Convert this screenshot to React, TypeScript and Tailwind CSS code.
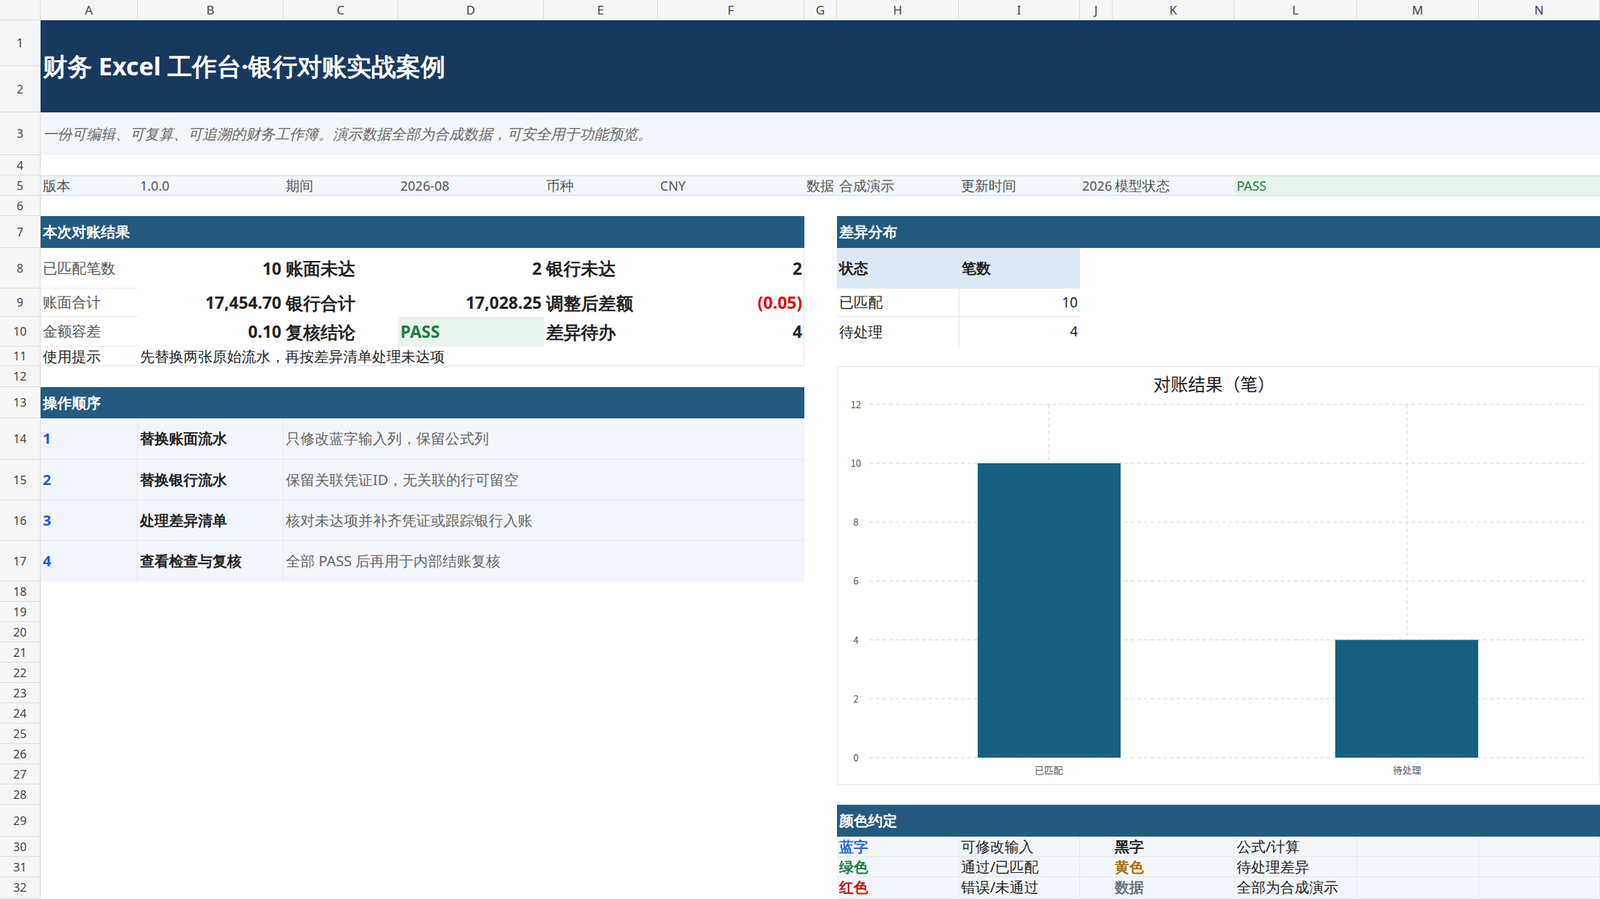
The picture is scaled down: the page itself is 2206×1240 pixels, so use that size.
import React from "react";

const colW = [134, 201, 158, 201, 157, 202, 45, 168, 167, 45, 168, 169, 168, 167];
const letters = ["A", "B", "C", "D", "E", "F", "G", "H", "I", "J", "K", "L", "M", "N"];
const rowH = [63, 64, 59, 28, 28, 28, 44, 56, 39, 41, 27, 29, 43, 57, 56, 56, 56, 28, 28, 28, 28, 28, 28, 28, 28, 28, 28, 28, 44, 28, 28, 29];

const cell = "flex items-center px-[3px] whitespace-nowrap overflow-visible";
const bd = "border-b border-r border-[#e3e8ef]";

function Chart() {
  const y0 = 539;
  const u = 40.6;
  const ticks = [0, 2, 4, 6, 8, 10, 12];
  return (
    <svg width="1052" height="576" className="block">
      <text x="519" y="33" textAnchor="middle" fontSize="24" fill="#222" fontFamily="Noto Sans CJK SC, sans-serif">对账结果（笔）</text>
      {ticks.map((t) => (
        <g key={t}>
          <line x1="44" x2="1030" y1={y0 - t * u} y2={y0 - t * u} stroke="#d4d4d4" strokeDasharray="5 4" />
          <text x="25" y={y0 - t * u + 5} textAnchor="middle" fontSize="13" fill="#555" fontFamily="Noto Sans CJK SC, sans-serif">{t}</text>
        </g>
      ))}
      <line x1="291" x2="291" y1={y0 - 12 * u} y2={y0} stroke="#d4d4d4" strokeDasharray="5 4" />
      <line x1="785" x2="785" y1={y0 - 12 * u} y2={y0} stroke="#d4d4d4" strokeDasharray="5 4" />
      <rect x="193" y={y0 - 10 * u} width="197" height={10 * u} fill="#156082" />
      <rect x="686" y={y0 - 4 * u} width="197" height={4 * u} fill="#156082" />
      <text x="291" y="561" textAnchor="middle" fontSize="13" fill="#555" fontFamily="Noto Sans CJK SC, sans-serif">已匹配</text>
      <text x="785" y="561" textAnchor="middle" fontSize="13" fill="#555" fontFamily="Noto Sans CJK SC, sans-serif">待处理</text>
    </svg>
  );
}

export default function App() {
  return (
    <div className="w-[2206px] h-[1240px] overflow-hidden bg-white font-['Noto_Sans_CJK_SC','Noto_Sans',sans-serif] text-[#222]">
      {/* column headers */}
      <div className="flex h-[28px] bg-[#f5f5f5] border-b border-[#d9d9d9]">
        <div className="w-[56px] shrink-0 border-r border-[#dcdcdc]" />
        {letters.map((l, i) => (
          <div key={l} style={{ width: colW[i] }} className="shrink-0 flex items-center justify-center text-[17px] text-[#444] border-r border-[#dcdcdc]">
            {l}
          </div>
        ))}
      </div>
      <div className="flex">
        {/* row headers */}
        <div className="w-[56px] shrink-0 bg-[#f5f5f5] flex flex-col">
          {rowH.map((h, i) => (
            <div key={i} style={{ height: h }} className="shrink-0 flex items-center justify-center text-[16px] text-[#444] border-b border-r border-[#dcdcdc]">
              {i + 1}
            </div>
          ))}
        </div>
        {/* body */}
        <div className="grid grid-cols-[134px_201px_158px_201px_157px_202px_45px_168px_167px_45px_168px_169px_168px_167px] grid-rows-[63px_64px_59px_28px_28px_28px_44px_56px_39px_41px_27px_29px_43px_57px_56px_56px_56px_repeat(11,28px)_44px_28px_28px_29px] text-[20px]">
          {/* title */}
          <div className="col-start-1 col-end-15 row-start-1 row-end-3 bg-[#17395f] text-white text-[34px] font-bold flex items-center px-[3px]">财务 Excel 工作台·银行对账实战案例</div>
          <div className="col-start-1 col-end-15 row-start-3 bg-[#f2f6fa] text-[#666] italic text-[20px] flex items-center px-[3px]">一份可编辑、可复算、可追溯的财务工作簿。演示数据全部为合成数据，可安全用于功能预览。</div>

          {/* row 5 */}
          <div className="col-start-1 col-end-15 row-start-5 bg-[#f2f6fa] border-y border-[#d6dde6]" />
          <div className={`col-start-1 row-start-5 ${cell} text-[#555] text-[19px]`}>版本</div>
          <div className={`col-start-2 row-start-5 ${cell} text-[#555] text-[18px]`}>1.0.0</div>
          <div className={`col-start-3 row-start-5 ${cell} text-[#555] text-[19px]`}>期间</div>
          <div className={`col-start-4 row-start-5 ${cell} text-[#555] text-[18px]`}>2026-08</div>
          <div className={`col-start-5 row-start-5 ${cell} text-[#555] text-[19px]`}>币种</div>
          <div className={`col-start-6 row-start-5 ${cell} text-[#555] text-[18px]`}>CNY</div>
          <div className={`col-start-7 row-start-5 ${cell} text-[#555] text-[19px]`}>数据</div>
          <div className={`col-start-8 row-start-5 ${cell} text-[#555] text-[19px]`}>合成演示</div>
          <div className={`col-start-9 row-start-5 ${cell} text-[#555] text-[19px]`}>更新时间</div>
          <div className={`col-start-10 row-start-5 ${cell} text-[#555] text-[18px] overflow-hidden`}>2026</div>
          <div className={`col-start-11 row-start-5 ${cell} text-[#555] text-[19px]`}>模型状态</div>
          <div className={`col-start-12 col-end-15 row-start-5 ${cell} bg-[#e6f4ea] text-[#1e7e45] text-[18px] border-y border-[#d6dde6]`}>PASS</div>

          {/* section headers */}
          <div className={`col-start-1 col-end-7 row-start-7 ${cell} bg-[#245a80] text-white font-bold`}>本次对账结果</div>
          <div className={`col-start-8 col-end-15 row-start-7 ${cell} bg-[#245a80] text-white font-bold`}>差异分布</div>

          {/* result block */}
          <div className="col-start-1 col-end-7 row-start-8 row-end-12 border-r border-b border-[#dfe4ea]" />
          <div className={`col-start-1 row-start-8 ${cell} text-[#555] border-b border-[#e6eaef]`}>已匹配笔数</div>
          <div className={`col-start-2 row-start-8 ${cell} justify-end font-bold text-[23px]`}>10</div>
          <div className={`col-start-3 row-start-8 ${cell} font-bold text-[24px]`}>账面未达</div>
          <div className={`col-start-4 row-start-8 ${cell} justify-end font-bold text-[23px]`}>2</div>
          <div className={`col-start-5 row-start-8 ${cell} font-bold text-[24px]`}>银行未达</div>
          <div className={`col-start-6 row-start-8 ${cell} justify-end font-bold text-[23px]`}>2</div>

          <div className={`col-start-1 row-start-9 ${cell} text-[#555] border-b border-[#e6eaef]`}>账面合计</div>
          <div className={`col-start-2 row-start-9 ${cell} justify-end font-bold text-[23px]`}>17,454.70</div>
          <div className={`col-start-3 row-start-9 ${cell} font-bold text-[24px]`}>银行合计</div>
          <div className={`col-start-4 row-start-9 ${cell} justify-end font-bold text-[23px]`}>17,028.25</div>
          <div className={`col-start-5 row-start-9 ${cell} font-bold text-[24px]`}>调整后差额</div>
          <div className={`col-start-6 row-start-9 ${cell} justify-end font-bold text-[23px] text-[#e00000]`}>(0.05)</div>

          <div className={`col-start-1 row-start-10 ${cell} text-[#555] border-b border-[#e6eaef]`}>金额容差</div>
          <div className={`col-start-2 row-start-10 ${cell} justify-end font-bold text-[23px]`}>0.10</div>
          <div className={`col-start-3 row-start-10 ${cell} font-bold text-[24px]`}>复核结论</div>
          <div className={`col-start-4 row-start-10 ${cell} bg-[#e8f4ec] text-[#1e7e45] font-bold text-[23px]`}>PASS</div>
          <div className={`col-start-5 row-start-10 ${cell} font-bold text-[24px]`}>差异待办</div>
          <div className={`col-start-6 row-start-10 ${cell} justify-end font-bold text-[23px]`}>4</div>

          <div className={`col-start-1 row-start-11 ${cell}`}>使用提示</div>
          <div className={`col-start-2 col-end-7 row-start-11 ${cell}`}>先替换两张原始流水，再按差异清单处理未达项</div>

          {/* distribution table */}
          <div className={`col-start-8 row-start-8 ${cell} bg-[#dce8f3] font-bold`}>状态</div>
          <div className={`col-start-9 row-start-8 ${cell} bg-[#dce8f3] font-bold border-l border-[#e3e8ef]`}>笔数</div>
          <div className={`col-start-8 row-start-9 ${cell} border-b border-[#e3e8ef]`}>已匹配</div>
          <div className={`col-start-9 row-start-9 ${cell} justify-end border-b border-l border-[#e3e8ef] text-[19px]`}>10</div>
          <div className={`col-start-8 row-start-10 ${cell}`}>待处理</div>
          <div className={`col-start-9 row-start-10 ${cell} justify-end border-l border-[#e3e8ef] text-[19px]`}>4</div>

          {/* steps */}
          <div className={`col-start-1 col-end-7 row-start-13 ${cell} bg-[#245a80] text-white font-bold`}>操作顺序</div>
          <div className={`col-start-1 row-start-14 ${cell} ${bd} bg-[#f2f6fa] text-[#1a56db] font-bold`}>1</div>
          <div className={`col-start-2 row-start-14 ${cell} ${bd} bg-[#f2f6fa] font-bold`}>替换账面流水</div>
          <div className={`col-start-3 col-end-7 row-start-14 ${cell} border-b border-[#e3e8ef] bg-[#f2f6fa] text-[#666]`}>只修改蓝字输入列，保留公式列</div>
          <div className={`col-start-1 row-start-15 ${cell} ${bd} bg-[#f2f6fa] text-[#1a56db] font-bold`}>2</div>
          <div className={`col-start-2 row-start-15 ${cell} ${bd} bg-[#f2f6fa] font-bold`}>替换银行流水</div>
          <div className={`col-start-3 col-end-7 row-start-15 ${cell} border-b border-[#e3e8ef] bg-[#f2f6fa] text-[#666]`}>保留关联凭证ID，无关联的行可留空</div>
          <div className={`col-start-1 row-start-16 ${cell} ${bd} bg-[#f2f6fa] text-[#1a56db] font-bold`}>3</div>
          <div className={`col-start-2 row-start-16 ${cell} ${bd} bg-[#f2f6fa] font-bold`}>处理差异清单</div>
          <div className={`col-start-3 col-end-7 row-start-16 ${cell} border-b border-[#e3e8ef] bg-[#f2f6fa] text-[#666]`}>核对未达项并补齐凭证或跟踪银行入账</div>
          <div className={`col-start-1 row-start-17 ${cell} border-r border-[#e3e8ef] bg-[#f2f6fa] text-[#1a56db] font-bold`}>4</div>
          <div className={`col-start-2 row-start-17 ${cell} border-r border-[#e3e8ef] bg-[#f2f6fa] font-bold`}>查看检查与复核</div>
          <div className={`col-start-3 col-end-7 row-start-17 ${cell} bg-[#f2f6fa] text-[#666]`}>全部 PASS 后再用于内部结账复核</div>

          {/* chart */}
          <div className="col-start-8 col-end-15 row-start-12 row-end-29 self-start border border-[#e5e7eb] bg-white">
            <Chart />
          </div>

          {/* colour legend */}
          <div className={`col-start-8 col-end-15 row-start-29 ${cell} bg-[#245a80] text-white font-bold`}>颜色约定</div>
          {[30, 31, 32].map((r) => null)}
          <div className={`col-start-8 row-start-30 ${cell} ${bd} bg-[#f2f6fa] text-[#2563eb] font-bold`}>蓝字</div>
          <div className={`col-start-9 row-start-30 ${cell} ${bd} bg-[#f2f6fa]`}>可修改输入</div>
          <div className={`col-start-10 row-start-30 ${bd} bg-[#f2f6fa]`} />
          <div className={`col-start-11 row-start-30 ${cell} ${bd} bg-[#f2f6fa] font-bold`}>黑字</div>
          <div className={`col-start-12 row-start-30 ${cell} ${bd} bg-[#f2f6fa]`}>公式/计算</div>
          <div className={`col-start-13 row-start-30 ${bd} bg-[#f2f6fa]`} />
          <div className={`col-start-14 row-start-30 ${bd} bg-[#f2f6fa]`} />

          <div className={`col-start-8 row-start-31 ${cell} ${bd} bg-[#f2f6fa] text-[#1e7e45] font-bold`}>绿色</div>
          <div className={`col-start-9 row-start-31 ${cell} ${bd} bg-[#f2f6fa]`}>通过/已匹配</div>
          <div className={`col-start-10 row-start-31 ${bd} bg-[#f2f6fa]`} />
          <div className={`col-start-11 row-start-31 ${cell} ${bd} bg-[#f2f6fa] text-[#b36b00] font-bold`}>黄色</div>
          <div className={`col-start-12 row-start-31 ${cell} ${bd} bg-[#f2f6fa]`}>待处理差异</div>
          <div className={`col-start-13 row-start-31 ${bd} bg-[#f2f6fa]`} />
          <div className={`col-start-14 row-start-31 ${bd} bg-[#f2f6fa]`} />

          <div className={`col-start-8 row-start-32 ${cell} ${bd} bg-[#f2f6fa] text-[#b91c1c] font-bold`}>红色</div>
          <div className={`col-start-9 row-start-32 ${cell} ${bd} bg-[#f2f6fa]`}>错误/未通过</div>
          <div className={`col-start-10 row-start-32 ${bd} bg-[#f2f6fa]`} />
          <div className={`col-start-11 row-start-32 ${cell} ${bd} bg-[#f2f6fa] text-[#6b7280] font-bold`}>数据</div>
          <div className={`col-start-12 row-start-32 ${cell} ${bd} bg-[#f2f6fa]`}>全部为合成演示</div>
          <div className={`col-start-13 row-start-32 ${bd} bg-[#f2f6fa]`} />
          <div className={`col-start-14 row-start-32 ${bd} bg-[#f2f6fa]`} />
        </div>
      </div>
    </div>
  );
}
